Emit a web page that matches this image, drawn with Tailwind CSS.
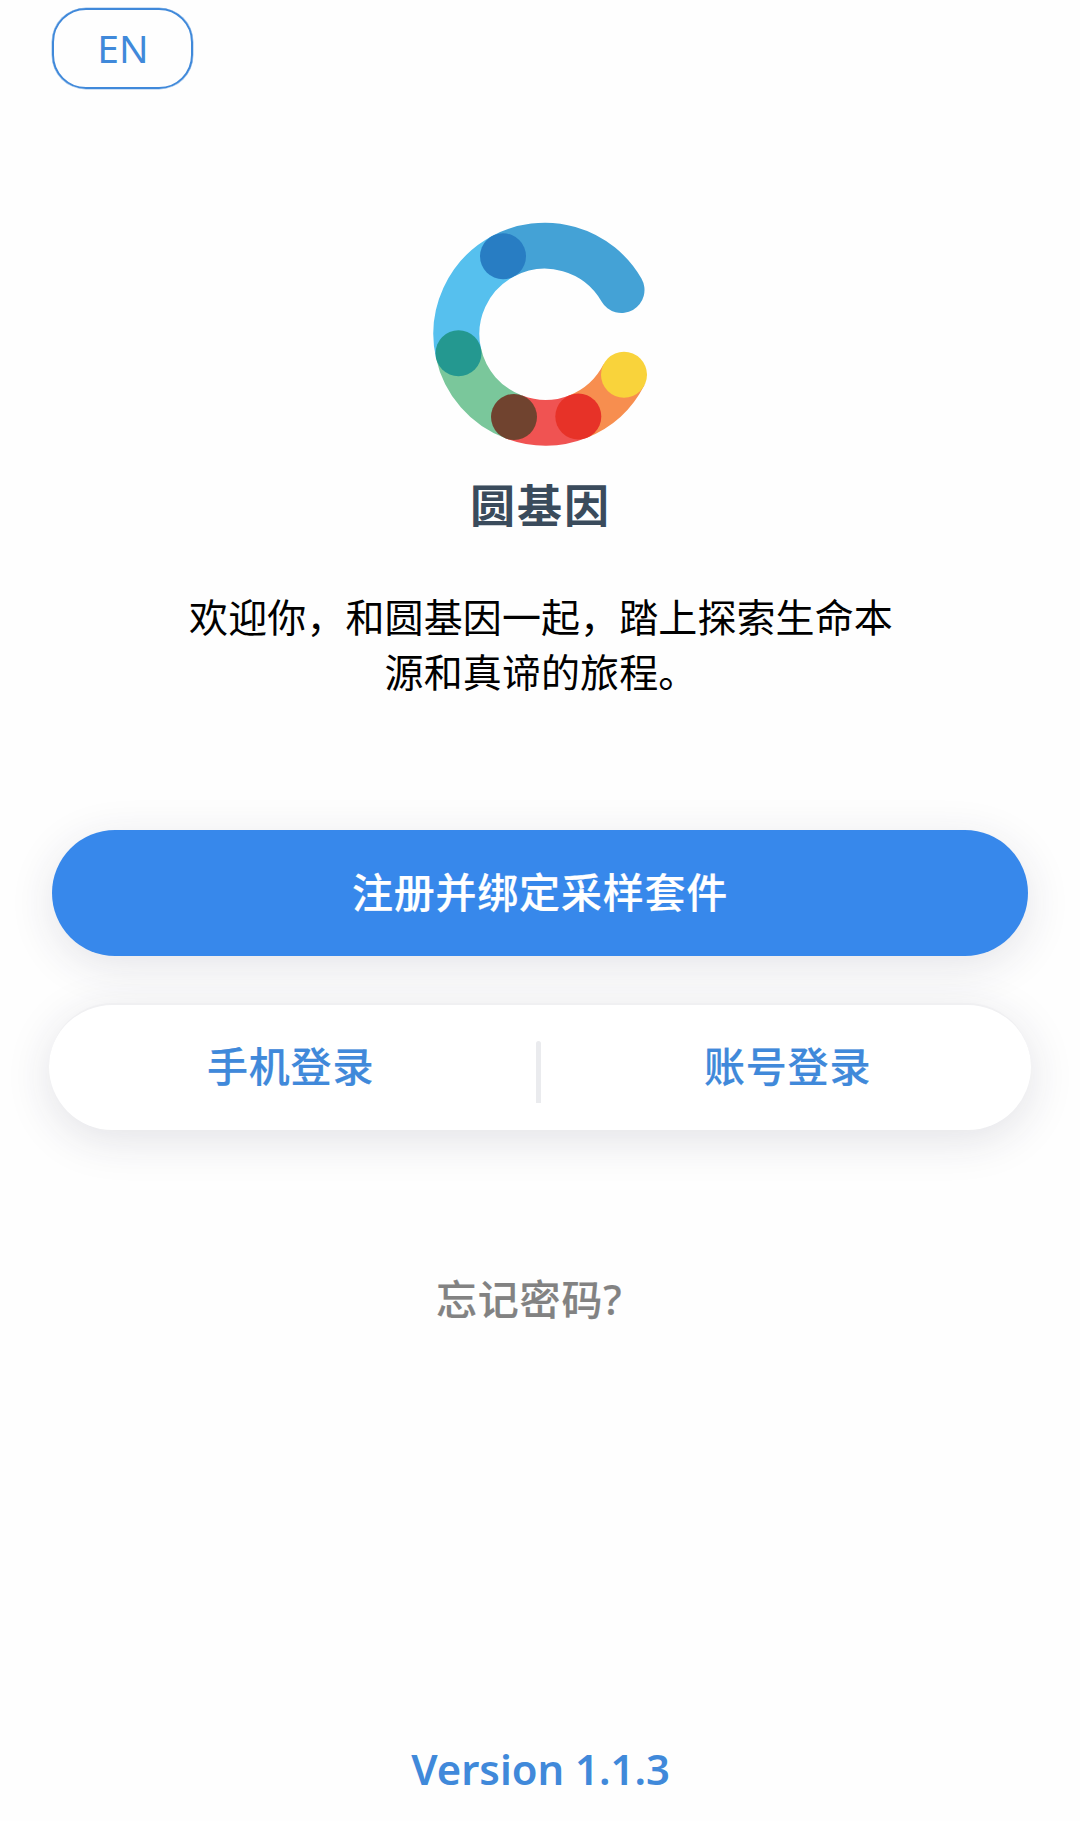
<!DOCTYPE html>
<html lang="zh-CN">
<head>
    <meta charset="UTF-8">
    <meta name="viewport" content="width=device-width, initial-scale=1.0">
    <title>圆基因</title>
    <script src="https://cdn.jsdelivr.net/npm/@tailwindcss/browser@4"></script>
</head>
<body class="bg-[#fefefe] font-['Noto_Sans','Noto_Sans_CJK_SC',sans-serif]">
    <div class="flex flex-col w-[1080px] h-[1821px] px-[52px] pt-2 overflow-hidden">
        <button class="w-[141px] h-[81px] pb-[2px] pl-[1px] rounded-[34px] border-2 border-[#4089da] ring-[0.5px] ring-[#4089da]/50 text-[39px] leading-none text-[#4089da]">EN</button>

        <!-- Logo -->
        <svg class="mt-[133px] ml-[380px] shrink-0" width="216" height="224" viewBox="432 222 216 224" fill="none" stroke-width="46">
            <path d="M503 256.3A88.3 88.3 0 0 1 621.5 290" stroke="#44a2d6" stroke-linecap="round"/>
            <path d="M458.5 353.3A88 88 0 0 1 503 256.3" stroke="#56c0ee"/>
            <path d="M514 417A88 88 0 0 1 458.5 353.3" stroke="#7ac79b"/>
            <path d="M578.3 416.5A88 88 0 0 1 514 417" stroke="#f05352"/>
            <path d="M624 374.7A88 88 0 0 1 578.3 416.5" stroke="#f78e4f"/>
            <g stroke="none">
                <circle cx="503" cy="256.3" r="23" fill="#287dc3"/>
                <circle cx="458.5" cy="353.3" r="23" fill="#249890"/>
                <circle cx="514" cy="417" r="23" fill="#70432f"/>
                <circle cx="578.3" cy="416.5" r="23" fill="#e73228"/>
                <circle cx="624" cy="374.7" r="23" fill="#f9d33b"/>
            </g>
        </svg>

        <h1 class="mt-[26px] pl-[1px] h-[68px] text-center text-[45px] leading-[68px] tracking-[2px] font-bold text-[#3a4b5c]">圆基因</h1>

        <p class="mt-[49px] ml-[136px] w-[706px] h-[111px] text-center text-[39px] leading-[55px] tracking-[0.1px] text-black">欢迎你，和圆基因一起，踏上探索生命本源和真谛的旅程。</p>

        <button class="mt-[130px] h-[126px] pb-[1px] shrink-0 rounded-full bg-[#3788eb] text-white text-[41px] tracking-[0.8px] font-medium [-webkit-text-stroke:0.2px] shadow-[0_10px_45px_rgba(40,40,70,0.12)]">注册并绑定采样套件</button>

        <div class="relative mt-[47px] -mx-[3px] h-[127px] shrink-0 flex items-center rounded-full border-t-2 border-[#f0f0f2] bg-white text-[41px] tracking-[0.8px] font-medium text-[#4089da] shadow-[0_10px_45px_rgba(40,40,70,0.13)]">
            <button class="w-[487px] pb-[2px] pl-[158px] text-left [-webkit-text-stroke:0.2px]">手机登录</button>
            <div class="w-[5px] h-[62px] mt-[9px] rounded-t bg-[#eaebee]"></div>
            <button class="pb-[2px] ml-[163px] [-webkit-text-stroke:0.2px]">账号登录</button>
        </div>

        <a href="#" class="mt-[138px] ml-[384px] h-[62px] text-[41px] leading-[62px] tracking-[0.8px] font-medium [-webkit-text-stroke:0.2px] text-[#828282]">忘记密码?</a>

        <p class="mt-[409px] pl-[1px] text-center text-[41.8px] leading-[60px] font-semibold text-[#4089da]">Version 1.1.3</p>
    </div>
</body>
</html>
